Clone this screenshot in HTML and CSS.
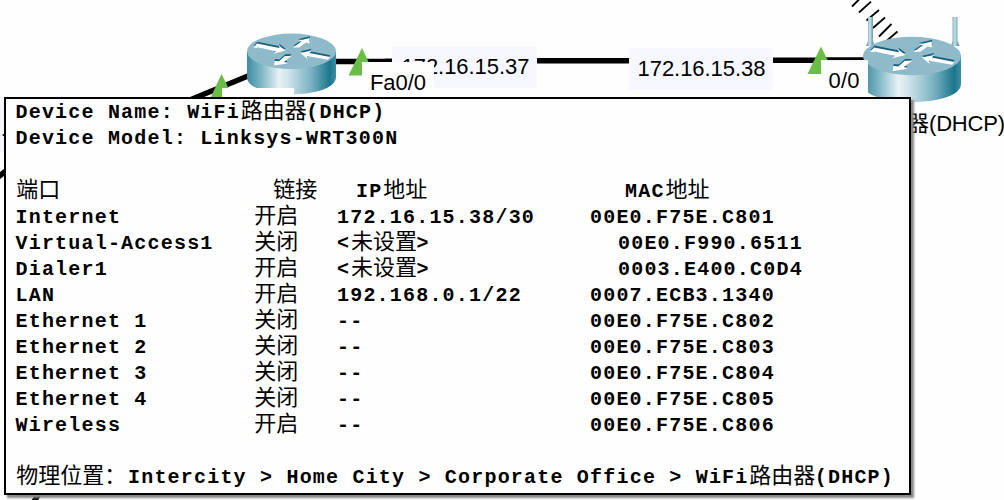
FILE: index.html
```html
<!DOCTYPE html>
<html lang="zh-CN">
<head>
<meta charset="utf-8">
<title>Network topology</title>
<link rel="stylesheet" href="styles.css">
</head>
<body>
<main class="workspace">
  <svg class="topology" width="1004" height="500" viewBox="0 0 1004 500">
    <defs>
      <linearGradient id="side" x1="0" x2="1" y1="0" y2="0">
        <stop offset="0" stop-color="#3c8ca2"/>
        <stop offset=".16" stop-color="#7fb6c5"/>
        <stop offset=".36" stop-color="#e6f2f5"/>
        <stop offset=".45" stop-color="#d3e7ec"/>
        <stop offset=".72" stop-color="#7ab2c2"/>
        <stop offset=".93" stop-color="#1c768e"/>
        <stop offset="1" stop-color="#3f8ea3"/>
      </linearGradient>
      <linearGradient id="rod" x1="0" x2="1" y1="0" y2="0">
        <stop offset="0" stop-color="#4a90a5"/>
        <stop offset=".45" stop-color="#c9e1e8"/>
        <stop offset="1" stop-color="#347f96"/>
      </linearGradient>
      <g id="arrow-set">
        <path d="M-38 -4L-34.500 -8L-12 -3.500L-12.500 -6L-6 -1L-18 2.200L-15.500 -.2L-34 -4.200L-35 -3.500Z"/>
        <path d="M1.500 -4L10 -10L6 -10.500L18 -13.500V-8L14.500 -9L7.500 -4Z"/>
        <path d="M9 1.500L20 -1L18 1.500L38.500 5.500L36.500 8.200L15.500 4.500L16 7.500Z"/>
        <path d="M-17.500 14L-17 9.200L-12.500 9.700L-6.500 4.500H0L-7.500 10.200L-4 12Z"/>
      </g>
      <g id="arrows">
        <use href="#arrow-set" class="arrow-shade" transform="translate(.3 -1.700)"/>
        <use href="#arrow-set" class="arrow-face"/>
      </g>
    </defs>

    <rect class="tint" x="0" y="97" width="4" height="55"/>
    <path class="cable" d="M185 102 L248 76"/>
    <path class="cable" d="M334 61.5 H392 M537 60.8 H629 M773 60.3 H870"/>
    <path class="cable" d="M-2 177 L6 171 M33 503 L42 489"/>
    <circle cx="3.5" cy="135" r="1"/>
    <path class="wireless" d="M852 6.5L859-.5M859 12.5L871 1.7M866.5 20.5L879 10M873 28L885 17.5M879 36.5L891.5 24M887 40.5L897.5 31.5"/>

    <path class="router-side" d="M247 51V77C247 100 336 100 336 77V51Z"/>
    <ellipse class="router-top" cx="291.5" cy="51.3" rx="44.5" ry="17.7"/>
    <use href="#arrows" transform="translate(291.500 51.500)"/>

    <path class="antenna" d="M868 17H873V41L874.5 46H866L868 41Z"/>
    <path class="antenna" d="M952.5 17H957.5V41L959.5 46H951L952.5 41Z"/>
    <path class="router-side" d="M863 56V84C863 108 961 108 961 84V56Z"/>
    <rect class="mask" x="821" y="60" width="47" height="40"/>
    <path d="M821 57.600H866V60.200H821Z"/>
    <ellipse class="router-top" cx="912" cy="56" rx="49" ry="19.2"/>
    <rect class="mask" x="821" y="60.200" width="47" height="40"/>
    <use href="#arrows" transform="translate(912 56) scale(1.100 1.070)"/>

    <path class="link-up" d="M221.5 74L235 101H209Z"/>
    <path class="link-up" d="M362 48L375 75.5H348.5Z"/>
    <path class="link-up" d="M821 46.5L827.500 60H821V74H807.5Z"/>

    <rect class="address-box" x="392" y="46" width="145" height="42"/>
    <path d="M385 58.700H392V62H385Z"/>
    <text class="label" x="401.5" y="74" textLength="128">172.16.15.37</text>
    <rect class="address-box" x="629" y="48" width="144" height="42"/>
    <text class="label" x="637.5" y="75.7" textLength="128">172.16.15.38</text>

    <rect class="mask" x="222" y="88" width="72" height="12"/>
    <rect class="mask" x="362" y="62" width="72" height="36"/>
    <text class="label" x="370" y="90" textLength="56">Fa0/0</text>
    <text class="label" x="828.5" y="88" textLength="31">0/0</text>
    <text class="label" x="907" y="131">器</text>
    <text class="label" x="929" y="130.5" textLength="76">(DHCP)</text>
  </svg>

  <section class="device-info">
    <div class="line">Device Name: WiFi<span class="zh">路由器</span>(DHCP)</div>
    <div class="line">Device Model: Linksys-WRT300N</div>
    <div class="ports">
      <div class="row head"><span><span class="zh">端口</span></span><span><span class="zh">链接</span></span><span>IP<span class="zh">地址</span></span><span>MAC<span class="zh">地址</span></span></div>
      <div class="row"><span>Internet</span><span><span class="zh">开启</span></span><span>172.16.15.38/30</span><span>00E0.F75E.C801</span></div>
      <div class="row unset"><span>Virtual-Access1</span><span><span class="zh">关闭</span></span><span>&lt;<span class="zh">未设置</span>&gt;</span><span>00E0.F990.6511</span></div>
      <div class="row unset"><span>Dialer1</span><span><span class="zh">开启</span></span><span>&lt;<span class="zh">未设置</span>&gt;</span><span>0003.E400.C0D4</span></div>
      <div class="row"><span>LAN</span><span><span class="zh">开启</span></span><span>192.168.0.1/22</span><span>0007.ECB3.1340</span></div>
      <div class="row"><span>Ethernet 1</span><span><span class="zh">关闭</span></span><span>--</span><span>00E0.F75E.C802</span></div>
      <div class="row"><span>Ethernet 2</span><span><span class="zh">关闭</span></span><span>--</span><span>00E0.F75E.C803</span></div>
      <div class="row"><span>Ethernet 3</span><span><span class="zh">关闭</span></span><span>--</span><span>00E0.F75E.C804</span></div>
      <div class="row"><span>Ethernet 4</span><span><span class="zh">关闭</span></span><span>--</span><span>00E0.F75E.C805</span></div>
      <div class="row"><span>Wireless</span><span><span class="zh">开启</span></span><span>--</span><span>00E0.F75E.C806</span></div>
    </div>
    <div class="line"><span class="zh location">物理位置：</span>Intercity &gt; Home City &gt; Corporate Office &gt; WiFi<span class="zh">路由器</span>(DHCP)</div>
  </section>
</main>
</body>
</html>
```
FILE: styles.css
```css
body {
  margin: 0;
  background: #fefefe;
}

.workspace {
  position: relative;
  width: 1004px;
  height: 500px;
  overflow: hidden;
}

.topology {
  display: block;
}

.tint { fill: #f6f6fb; }
.mask { fill: #fefefe; }
.address-box { fill: #f7f7ff; }
.link-up { fill: #6abd45; }
.router-side { fill: url(#side); }
.router-top { fill: #8fbaca; }
.antenna { fill: url(#rod); }
.arrow-shade { fill: #17617a; }
.arrow-face { fill: #fff; }

.cable {
  fill: none;
  stroke: #000;
  stroke-width: 5.5;
}

.wireless {
  fill: none;
  stroke: #000;
  stroke-width: 1.8;
}

.label {
  font: 22px "Liberation Sans", "Noto Sans CJK SC", sans-serif;
  fill: #000;
}

/* Device tooltip floating over the canvas */
.device-info {
  position: absolute;
  left: 4px;
  top: 97px;
  box-sizing: border-box;
  width: 907px;
  height: 398px;
  padding: 1px 0 0 9.5px;
  border: 2px solid #000;
  background: #fefefe;
  box-shadow: 3px 3px 2px #888;
  color: #000;
  font: bold 20px/26px "Liberation Mono", "Noto Sans CJK SC", monospace;
  letter-spacing: 1.2px;
  white-space: nowrap;
}

.line {
  height: 26px;
}

.ports {
  padding: 27px 0 26px;
}

.row {
  display: grid;
  grid-template-columns: 238px 83.5px 253px 1fr;
  height: 26px;
}

.zh {
  margin: 0 -.5px 0 .8px;
  font-family: "Noto Sans CJK SC", sans-serif;
  font-size: 22px;
  font-weight: 400;
  letter-spacing: 0;
  line-height: 0;
}

.location {
  margin-right: 1.7px;
}

.head > :nth-child(2) { padding-left: 19px; }
.head > :nth-child(3) { padding-left: 19px; }
.head > :nth-child(4) { padding-left: 35px; }
.unset > :nth-child(4) { padding-left: 28px; }
```
